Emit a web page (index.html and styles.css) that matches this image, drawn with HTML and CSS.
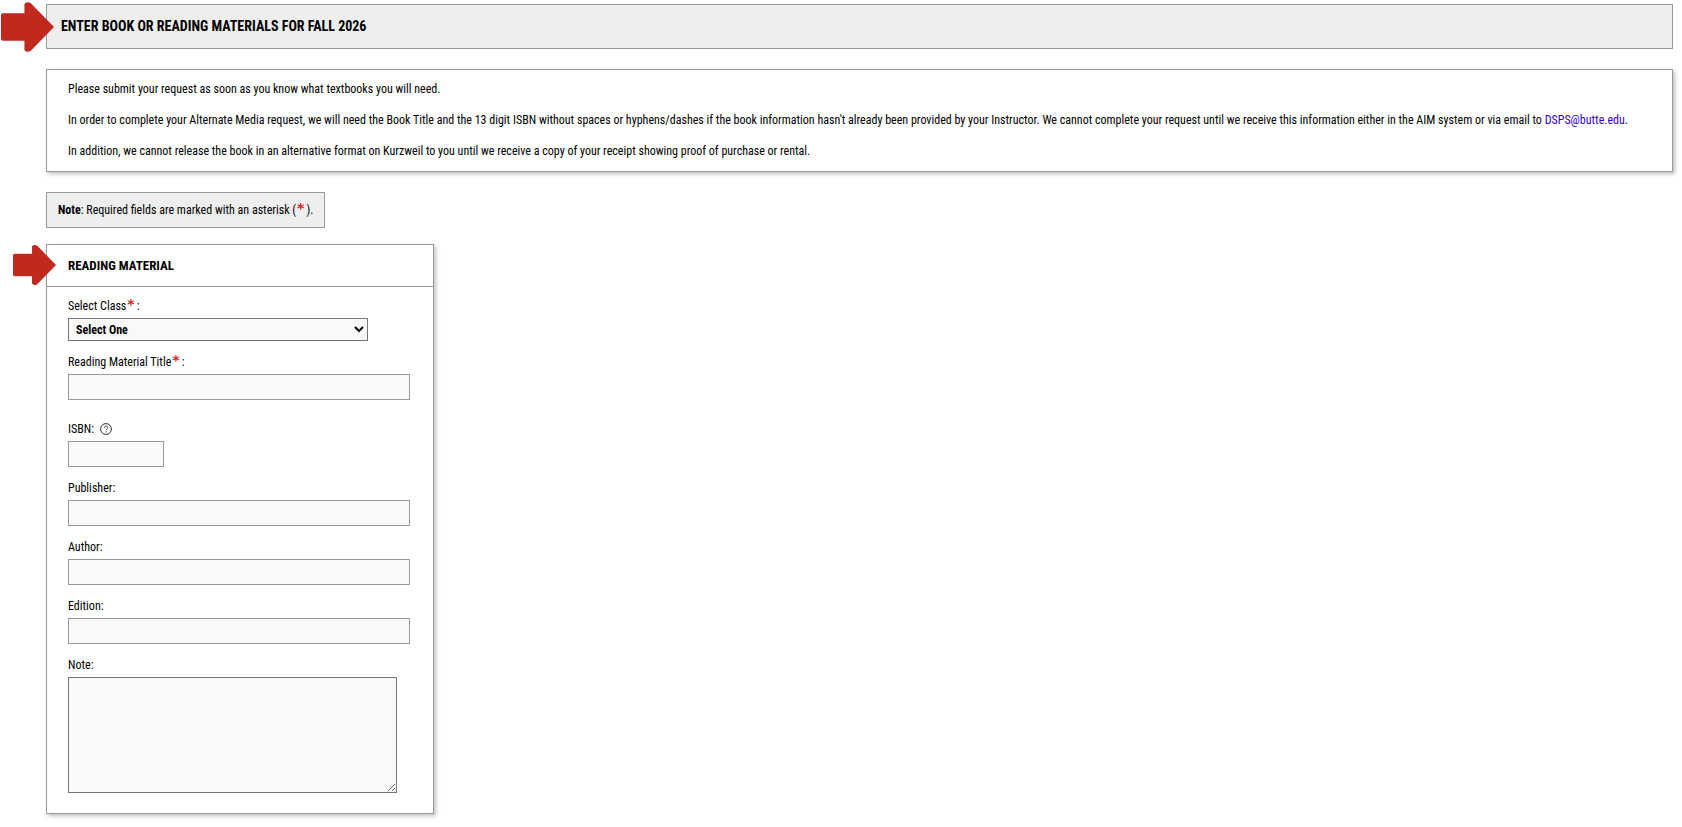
FILE: index.html
```
<!DOCTYPE html>
<html lang="en">

<head>
    <meta charset="UTF-8">
    <meta name="viewport" content="width=device-width, initial-scale=1.0">
    <title>Enter Book or Reading Materials</title>
    <link rel="stylesheet" href="styles.css">
</head>

<body>
    <main class="page">
        <header class="page-title">
            <svg class="arrow arrow-large" viewBox="0 0 52 49" aria-hidden="true">
                <path d="M2 11H23V2Q25 -1 29 1L52 24.5L29 48Q25 50 23 47V38H2Q0 38 0 36V13Q0 11 2 11Z" />
            </svg>
            <h1>ENTER BOOK OR READING MATERIALS FOR FALL 2026</h1>
        </header>

        <section class="info">
            <p>Please submit your request as soon as you know what textbooks you will need.</p>
            <p>In order to complete your Alternate Media request, we will need the Book Title and the 13 digit ISBN without spaces or hyphens/dashes if the book information hasn't already been provided by your Instructor. We cannot complete your request until we receive this information either in the AIM system or via email to <a href="mailto:DSPS@butte.edu">DSPS@butte.edu</a>.</p>
            <p>In addition, we cannot release the book in an alternative format on Kurzweil to you until we receive a copy of your receipt showing proof of purchase or rental.</p>
        </section>

        <p class="required-note"><strong>Note</strong>: Required fields are marked with an asterisk (<span class="required">*</span>).</p>

        <form class="card">
            <div class="card-title">
                <svg class="arrow arrow-small" viewBox="0 0 52 49" aria-hidden="true">
                    <path d="M2 11H23V2Q25 -1 29 1L52 24.5L29 48Q25 50 23 47V38H2Q0 38 0 36V13Q0 11 2 11Z" />
                </svg>
                <h2>READING MATERIAL</h2>
            </div>

            <div class="card-body">
                <div class="field">
                    <label for="class">Select Class<span class="required">*</span>:</label>
                    <select id="class">
                        <option>Select One</option>
                    </select>
                </div>

                <div class="field field-title">
                    <label for="title">Reading Material Title<span class="required">*</span>:</label>
                    <input type="text" id="title">
                </div>

                <div class="field">
                    <div class="label-row">
                        <label for="isbn">ISBN:</label>
                        <button type="button" class="help" aria-label="Help">
                            <svg viewBox="0 0 12 12" aria-hidden="true">
                                <circle cx="6" cy="6" r="5.4" />
                                <path d="M4.4 4.8C4.4 2.6 7.7 2.6 7.7 4.7C7.7 6 6.1 6 6.1 7.3M6.1 8.3V9.2" />
                            </svg>
                        </button>
                    </div>
                    <input type="text" id="isbn" class="short">
                </div>

                <div class="field">
                    <label for="publisher">Publisher:</label>
                    <input type="text" id="publisher">
                </div>

                <div class="field">
                    <label for="author">Author:</label>
                    <input type="text" id="author">
                </div>

                <div class="field">
                    <label for="edition">Edition:</label>
                    <input type="text" id="edition">
                </div>

                <div class="field">
                    <label for="note">Note:</label>
                    <textarea id="note"></textarea>
                </div>
            </div>
        </form>
    </main>
</body>

</html>
```

FILE: styles.css
```
* {
    box-sizing: border-box;
}

body {
    margin: 0;
    font-family: "Roboto Condensed", Roboto, Arial, sans-serif;
    font-size: 12px;
    line-height: 18px;
    color: #000;
    background-color: #fff;
}

h1,
h2,
p {
    margin: 0;
}

.page {
    padding: 4px 9px 12px 46px;
}

.page-title {
    position: relative;
    padding: 10px 14px;
    border: 1px solid #999;
    background-color: #eee;
}

h1 {
    font-size: 14px;
    line-height: 23px;
}

h2 {
    font-size: 13px;
    line-height: 18px;
}

/* Red pointers hanging over the left edge of a box */
.arrow {
    position: absolute;
    fill: #c1281e;
}

.arrow-large {
    top: -3px;
    left: -46px;
    width: 53px;
    height: 50px;
}

.arrow-small {
    top: -1px;
    left: -34px;
    width: 43px;
    height: 42px;
}

.info {
    display: flex;
    flex-direction: column;
    gap: 13px;
    margin-top: 20px;
    padding: 10px 21px 11px;
    border: 1px solid #999;
    box-shadow: 2px 2px 4px rgba(0, 0, 0, 0.25);
}

a {
    color: #30d;
    text-decoration: none;
}

.required-note {
    width: fit-content;
    margin-top: 20px;
    padding: 8px 11px;
    border: 1px solid #999;
    background-color: #eee;
}

.required {
    padding: 0 2px 0 1px;
    font-family: "DejaVu Sans", sans-serif;
    font-size: 14px;
    font-weight: bold;
    line-height: 0;
    vertical-align: 1px;
    color: #d9241b;
}

.card {
    width: fit-content;
    margin-top: 16px;
    border: 1px solid #999;
    box-shadow: 2px 2px 4px rgba(0, 0, 0, 0.25);
}

.card-title {
    position: relative;
    padding: 12px 21px 11px;
    border-bottom: 1px solid #999;
}

.card-body {
    display: flex;
    flex-direction: column;
    gap: 12px;
    padding: 10px 23px 20px 21px;
}

.field {
    display: flex;
    flex-direction: column;
    align-items: flex-start;
    gap: 3px;
}

.field-title {
    padding-bottom: 8px;
}

.label-row {
    display: flex;
    align-items: center;
    gap: 6px;
}

label {
    height: 18px;
}

input,
select,
textarea {
    font-family: inherit;
    font-size: 12px;
    background-color: #f9f9f9;
    border-radius: 0;
}

input {
    width: 342px;
    height: 26px;
    padding: 4px;
    border: 1px solid #999;
}

.short {
    width: 96px;
}

select {
    width: 300px;
    height: 23px;
    padding: 0 3px;
    border: 1px solid #767676;
    font-weight: bold;
}

textarea {
    width: 329px;
    height: 116px;
    padding: 4px;
    border: 1px solid #767676;
}

.help {
    display: flex;
    padding: 0;
    border: 0;
    background: none;
    cursor: pointer;
}

.help svg {
    width: 12px;
    height: 12px;
    fill: none;
    stroke: #333;
    stroke-width: 1;
}
```
